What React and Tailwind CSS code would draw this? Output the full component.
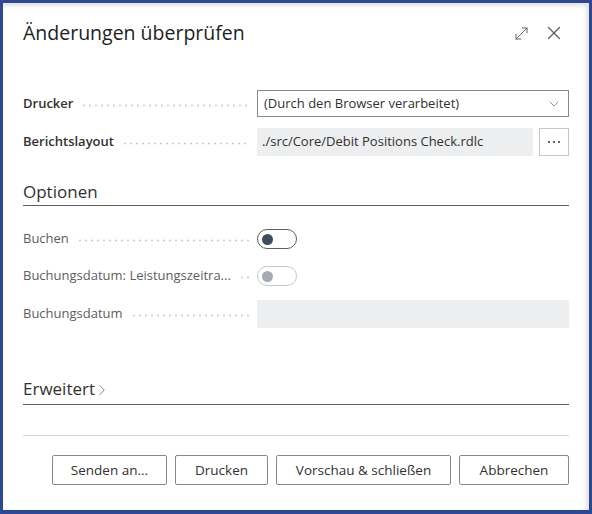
import { MoveDiagonal, X, ChevronDown, ChevronRight } from 'lucide-react'

const font = { fontFamily: '"Open Sans", "Noto Sans", sans-serif' }

function Leader() {
  return (
    <span className="flex-1 mx-2 h-[3px] self-center mt-[3px] bg-[radial-gradient(circle,#cbcbcb_0.9px,transparent_1.2px)] bg-[length:6px_3px] bg-repeat-x" />
  )
}

function Label({ children, bold }) {
  return (
    <div className="w-[234px] flex items-center shrink-0">
      <span className={bold ? 'text-[13px] font-semibold text-[#323130]' : 'text-[13px] text-[#605e5c]'}>{children}</span>
      <Leader />
    </div>
  )
}

function Toggle({ disabled }) {
  return (
    <div
      className={`w-[40px] h-[20px] rounded-full border-[1.5px] flex items-center pl-[4px] ${
        disabled ? 'border-[#c8c6c4]' : 'border-[#605e5c]'
      }`}
    >
      <span className={`w-[11px] h-[11px] rounded-full ${disabled ? 'bg-[#a6abb4]' : 'bg-[#414b5e]'}`} />
    </div>
  )
}

function Btn({ children, w }) {
  return (
    <button className={`${w} h-[30px] border border-[#8a8886] rounded-[2px] bg-white text-[13.5px] font-medium text-[#323130]`}>
      {children}
    </button>
  )
}

export default function App() {
  return (
    <div
      style={font}
      className="w-[592px] h-[514px] bg-white border-t-[3px] border-l-[3px] border-r-[3px] border-b-[4px] border-[#2d4797] shadow-[inset_-3px_3px_4px_rgba(0,0,0,0.12)] px-[20px] box-border overflow-hidden"
    >
      <div className="flex items-center justify-between mt-[16px] h-[28px]">
        <h1 className="text-[19.5px] font-medium text-[#201f1e]">Änderungen überprüfen</h1>
        <div className="flex items-center gap-[12px] mr-[4px] text-[#605e5c]">
          <MoveDiagonal size={19} strokeWidth={1.2} />
          <X size={22} strokeWidth={1.3} />
        </div>
      </div>

      <div className="mt-[43px] flex items-center h-[27px]">
        <Label bold>Drucker</Label>
        <div className="flex-1 h-[27px] border border-[#8a8886] flex items-center justify-between pl-[6px] pr-[6px]">
          <span className="text-[13px] text-[#323130]">(Durch den Browser verarbeitet)</span>
          <ChevronDown size={16} strokeWidth={1} className="text-[#605e5c]" />
        </div>
      </div>

      <div className="mt-[11px] flex items-center h-[28px]">
        <Label bold>Berichtslayout</Label>
        <div className="flex-1 h-[28px] bg-[#edeeef] flex items-center pl-[5px]">
          <span className="text-[13px] text-[#323130]">./src/Core/Debit Positions Check.rdlc</span>
        </div>
        <button className="ml-[6px] w-[30px] h-[28px] border border-[#c8c6c4] flex items-center justify-center gap-[3px]">
          <span className="w-[2px] h-[2px] rounded-full bg-[#323130]" />
          <span className="w-[2px] h-[2px] rounded-full bg-[#323130]" />
          <span className="w-[2px] h-[2px] rounded-full bg-[#323130]" />
        </button>
      </div>

      <div className="mt-[22px] h-[28px] border-b border-[#605e5c] flex items-center">
        <h2 className="text-[17px] font-medium text-[#323130]">Optionen</h2>
      </div>

      <div className="mt-[23px] flex items-center h-[20px]">
        <Label>Buchen</Label>
        <Toggle />
      </div>

      <div className="mt-[17px] flex items-center h-[20px]">
        <Label>Buchungsdatum: Leistungszeitra...</Label>
        <Toggle disabled />
      </div>

      <div className="mt-[14px] flex items-center h-[28px]">
        <Label>Buchungsdatum</Label>
        <div className="flex-1 h-[28px] bg-[#edeeef]" />
      </div>

      <div className="mt-[46px] h-[31px] border-b border-[#605e5c] flex items-center">
        <h2 className="text-[17px] font-medium text-[#323130]">Erweitert</h2>
        <ChevronRight size={18} strokeWidth={1} className="text-[#605e5c] mt-[2px] -ml-[2px]" />
      </div>

      <div className="mt-[30px] border-t border-[#d6d6d6]" />

      <div className="mt-[19px] flex justify-end gap-[8px]">
        <Btn w="w-[115px]">Senden an...</Btn>
        <Btn w="w-[93px]">Drucken</Btn>
        <Btn w="w-[175px]">Vorschau &amp; schließen</Btn>
        <Btn w="w-[110px]">Abbrechen</Btn>
      </div>
    </div>
  )
}
